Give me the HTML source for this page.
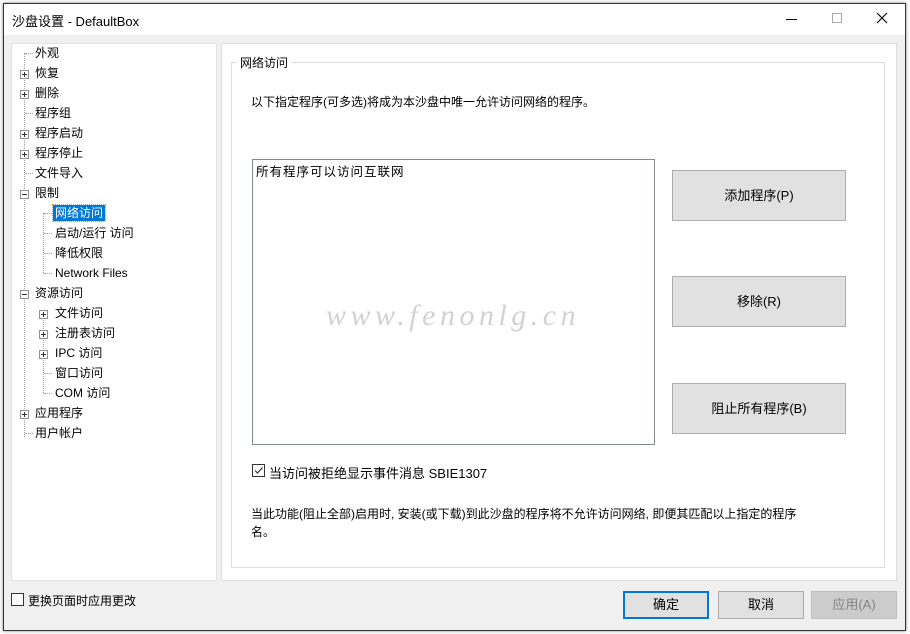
<!DOCTYPE html>
<html><head><meta charset="utf-8"><style>
*{margin:0;padding:0;box-sizing:border-box}
body{width:910px;height:634px;background:#fff;font-family:"Liberation Sans","Noto Sans CJK SC",sans-serif;font-size:12px;color:#000;position:relative;overflow:hidden}
.win{position:absolute;left:3px;top:3px;width:903px;height:628px;border:1px solid #333;background:#f0f0f0;box-shadow:0 0 3px rgba(0,0,0,.5)}
.title{position:absolute;left:0;top:0;right:0;height:31px;background:#fff}
.abs{position:absolute}
.tree{left:7px;top:39px;width:206px;height:538px;background:#fff;border:1px solid #e3e3e3;overflow:hidden}
.in{position:absolute;left:-3px;top:1px;width:210px;height:530px}
.item{position:absolute;height:16px;line-height:16px;white-space:nowrap}
.pl{position:absolute;width:9px;height:9px;border:1px solid #919191;background:#fff}
.pl:before{content:"";position:absolute;left:1px;top:3px;width:5px;height:1px;background:#333}
.pl.p:after{content:"";position:absolute;left:3px;top:1px;width:1px;height:5px;background:#333}
.dv{position:absolute;border-left:1px dotted #a0a0a0}
.dh{position:absolute;border-top:1px dotted #a0a0a0;width:8px}
.btn{position:absolute;background:#e1e1e1;border:1px solid #adadad;text-align:center;font-size:13px}
</style></head><body>
<div class="win">
<div class="title">
<div class="abs" style="left:8px;top:7px;font-size:13px">沙盘设置 - DefaultBox</div>
<div class="abs" style="left:782px;top:15px;width:11px;height:1px;background:#000"></div>
<div class="abs" style="left:828px;top:9px;width:10px;height:10px;border:1px solid #aaa"></div>
<svg class="abs" style="left:872px;top:8px" width="12" height="12"><path d="M1 1L11 11M11 1L1 11" stroke="#000" stroke-width="1.1"/></svg>
</div>
<div class="abs tree"><div class="in">
<div class="dv" style="left:15px;top:8px;height:384px"></div>
<div class="dv" style="left:34px;top:168px;height:60px"></div>
<div class="dv" style="left:34px;top:268px;height:80px"></div>
<div class="dh" style="left:16px;top:8px"></div><div class="item" style="left:26px;top:0">外观</div>
<div class="pl p" style="left:11px;top:25px"></div><div class="item" style="left:26px;top:20px">恢复</div>
<div class="pl p" style="left:11px;top:45px"></div><div class="item" style="left:26px;top:40px">删除</div>
<div class="dh" style="left:16px;top:68px"></div><div class="item" style="left:26px;top:60px">程序组</div>
<div class="pl p" style="left:11px;top:85px"></div><div class="item" style="left:26px;top:80px">程序启动</div>
<div class="pl p" style="left:11px;top:105px"></div><div class="item" style="left:26px;top:100px">程序停止</div>
<div class="dh" style="left:16px;top:128px"></div><div class="item" style="left:26px;top:120px">文件导入</div>
<div class="pl" style="left:11px;top:145px"></div><div class="item" style="left:26px;top:140px">限制</div>
<div class="dh" style="left:35px;top:168px"></div><div class="item" style="left:44px;top:160px;background:#0078d7;color:#fff;padding:0 2px;outline:1px dotted #f0a000">网络访问</div>
<div class="dh" style="left:35px;top:188px"></div><div class="item" style="left:46px;top:180px">启动/运行 访问</div>
<div class="dh" style="left:35px;top:208px"></div><div class="item" style="left:46px;top:200px">降低权限</div>
<div class="dh" style="left:35px;top:228px"></div><div class="item" style="left:46px;top:220px">Network Files</div>
<div class="pl" style="left:11px;top:245px"></div><div class="item" style="left:26px;top:240px">资源访问</div>
<div class="pl p" style="left:30px;top:265px"></div><div class="item" style="left:46px;top:260px">文件访问</div>
<div class="pl p" style="left:30px;top:285px"></div><div class="item" style="left:46px;top:280px">注册表访问</div>
<div class="pl p" style="left:30px;top:305px"></div><div class="item" style="left:46px;top:300px">IPC 访问</div>
<div class="dh" style="left:35px;top:328px"></div><div class="item" style="left:46px;top:320px">窗口访问</div>
<div class="dh" style="left:35px;top:348px"></div><div class="item" style="left:46px;top:340px">COM 访问</div>
<div class="pl p" style="left:11px;top:365px"></div><div class="item" style="left:26px;top:360px">应用程序</div>
<div class="dh" style="left:16px;top:388px"></div><div class="item" style="left:26px;top:380px">用户帐户</div>
</div></div>
<div class="abs" style="left:217px;top:39px;width:676px;height:538px;background:#fff;border:1px solid #dcdcdc"></div>
<div class="abs" style="left:227px;top:58px;width:654px;height:506px;border:1px solid #dcdcdc"></div>
<div class="abs" style="left:233px;top:50px;background:#fff;padding:0 3px;font-size:12px">网络访问</div>
<div class="abs" style="left:247px;top:89px;font-size:12px">以下指定程序(可多选)将成为本沙盘中唯一允许访问网络的程序。</div>
<div class="abs" style="left:248px;top:155px;width:403px;height:286px;border:1px solid #828790;background:#fff">
<div style="position:absolute;left:3px;top:1px;font-size:12.5px;letter-spacing:1px">所有程序可以访问互联网</div></div>
<div class="abs" style="left:322px;top:295px;font-family:'Liberation Serif',serif;font-style:italic;font-size:30px;color:#d2d2d2;letter-spacing:4.5px">www.fenonlg.cn</div>
<div class="btn" style="left:668px;top:166px;width:174px;height:51px;line-height:49px">添加程序(P)</div>
<div class="btn" style="left:668px;top:272px;width:174px;height:51px;line-height:49px">移除(R)</div>
<div class="btn" style="left:668px;top:379px;width:174px;height:51px;line-height:49px">阻止所有程序(B)</div>
<div class="abs" style="left:248px;top:460px;width:13px;height:13px;border:1px solid #333;background:#fff"><svg width="11" height="11" style="position:absolute;left:0;top:0"><path d="M2 5.5L4.5 8L9.5 2.5" stroke="#333" stroke-width="1.2" fill="none"/></svg></div>
<div class="abs" style="left:265px;top:459px;font-size:13px">当访问被拒绝显示事件消息 SBIE1307</div>
<div class="abs" style="left:247px;top:501px;width:560px;line-height:18px;font-size:12px">当此功能(阻止全部)启用时, 安装(或下载)到此沙盘的程序将不允许访问网络, 即便其匹配以上指定的程序名。</div>
<div class="abs" style="left:7px;top:589px;width:13px;height:13px;border:1px solid #333;background:#fff"></div>
<div class="abs" style="left:24px;top:588px;font-size:12px">更换页面时应用更改</div>
<div class="btn" style="left:619px;top:587px;width:86px;height:28px;line-height:24px;border:2px solid #0078d7">确定</div>
<div class="btn" style="left:714px;top:587px;width:86px;height:28px;line-height:26px">取消</div>
<div class="btn" style="left:807px;top:587px;width:86px;height:28px;line-height:26px;background:#ccc;border-color:#bfbfbf;color:#838383">应用(A)</div>
</div>
</body></html>
